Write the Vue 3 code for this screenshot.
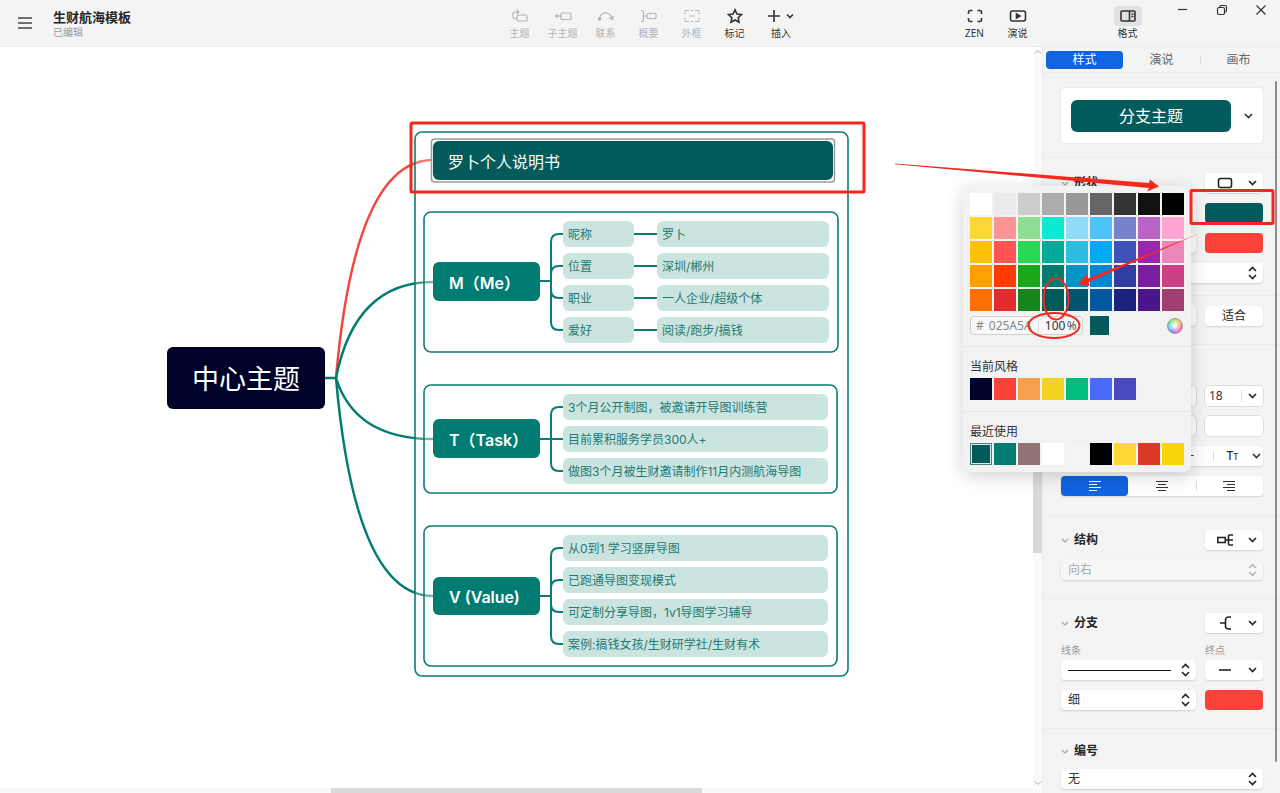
<script setup>
import { ref } from 'vue'

const editTools = [
  { id: 'topic', label: '主题', off: true },
  { id: 'sub', label: '子主题', off: true },
  { id: 'relation', label: '联系', off: true },
  { id: 'summary', label: '概要', off: true },
  { id: 'boundary', label: '外框', off: true },
  { id: 'marker', label: '标记', off: false },
  { id: 'insert', label: '插入', off: false, wide: true },
]
const tabs = ['样式', '演说', '画布']

const palette = [
  '#ffffff', '#ebebeb', '#cdcdcd', '#acacac', '#989898', '#666666', '#343434', '#111111', '#000000',
  '#fdd835', '#ff9393', '#8ede96', '#0be9d1', '#8fdcf8', '#4fc3f9', '#7683cb', '#ba64c8', '#ffa5d2',
  '#fec107', '#ff5355', '#2bd853', '#04a99c', '#2cbde0', '#03a9f7', '#3f51b5', '#9b24b0', '#ea87b9',
  '#ffa000', '#ff3a02', '#1aa81a', '#027c70', '#0294c2', '#0387d2', '#303e9f', '#7b1fa2', '#cc4088',
  '#ff7003', '#e22c30', '#15851c', '#025a5a', '#025470', '#0257a0', '#1a227e', '#4a148c', '#a04070',
]
const themeColors = ['#000229', '#fa423a', '#f6a04d', '#f3d321', '#00bd7b', '#486afe', '#4c49be']
const recentColors = ['#035a5a', '#007c70', '#927272', '#ffffff', '#f4f4f4', '#000000', '#fdd835', '#da3828', '#f8d60a']

const hex = ref('025A5A')
const opacity = ref('100')

const nodes = [
  { kind: 'root', x: 167, y: 300, w: 158, h: 62, text: '中心主题' },
  { kind: 'picked', x: 433, y: 94, w: 400, h: 39, text: '罗卜个人说明书' },
  { kind: 'main', x: 433, y: 215, w: 107, h: 39, text: 'M（Me）' },
  { kind: 'main', x: 433, y: 372, w: 107, h: 39, text: 'T（Task）' },
  { kind: 'main', x: 433, y: 530, w: 107, h: 38, text: 'V (Value)' },
]
const groups = [
  { hub: 234, top: 174, w: 71, items: ['昵称', '位置', '职业', '爱好'], extra: ['罗卜', '深圳/郴州', '一人企业/超级个体', '阅读/跑步/搞钱'] },
  { hub: 392, top: 347, w: 265, items: ['3个月公开制图，被邀请开导图训练营', '目前累积服务学员300人+', '做图3个月被生财邀请制作11月内测航海导图'] },
  { hub: 549, top: 488, w: 265, items: ['从0到1 学习竖屏导图', '已跑通导图变现模式', '可定制分享导图，1v1导图学习辅导', '案例:搞钱女孩/生财研学社/生财有术'] },
]
const leaves = []
const wires = []
for (const g of groups) {
  g.items.forEach((text, i) => {
    const y = g.top + i * 32
    const c = y + 13
    leaves.push({ x: 563, y, w: g.w, text })
    if (g.extra) {
      leaves.push({ x: 657, y, w: 172, text: g.extra[i] })
      wires.push(`M634 ${c}H657`)
    }
    const d = c < g.hub ? 8 : -8
    wires.push(Math.abs(c - g.hub) < 2 ? `M540 ${c}H563` : `M540 ${g.hub}H551V${c + d}Q551 ${c} 559 ${c}H563`)
  })
}
const box = (n) => ({ left: n.x + 'px', top: n.y + 'px', width: n.w + 'px', height: (n.h || 26) + 'px' })
</script>

<template>
  <div class="app">
    <header class="top">
      <div class="top-left">
        <button class="menu" aria-label="菜单">
          <svg width="16" height="14" viewBox="0 0 16 14" class="ln"><path d="M1 2h14M1 7h14M1 12h14" stroke-width="1.500" /></svg>
        </button>
        <div>
          <h1>生财航海模板</h1>
          <p>已编辑</p>
        </div>
      </div>

      <nav class="tools" aria-label="编辑">
        <button v-for="t in editTools" :key="t.id" class="tool" :class="{ off: t.off, wide: t.wide }">
          <span class="ico">
            <svg v-if="t.id === 'topic'" width="18" height="16" viewBox="0 0 18 16" class="ln"><rect x="6" y="7" width="10" height="6" rx="1.5" /><path d="M5.500 10.500H3.500Q2 10.500 2 9V6Q2 4 4 4H8M5.500 1.500l2.500 2.500-2.500 2" /></svg>
            <svg v-else-if="t.id === 'sub'" width="18" height="16" viewBox="0 0 18 16" class="ln"><rect x="7" y="5" width="10" height="6.500" rx="1" /><path d="M3 8h4" /><circle cx="2.500" cy="8" r="1" class="solid" /></svg>
            <svg v-else-if="t.id === 'relation'" width="18" height="16" viewBox="0 0 18 16" class="ln"><path d="M2.500 10.500C4 3 13 3 15 10.500M12 10l3.200 1.500L16.500 8" /><circle cx="2.500" cy="11" r="1.200" class="solid" /></svg>
            <svg v-else-if="t.id === 'summary'" width="18" height="16" viewBox="0 0 18 16" class="ln"><path d="M1 2.500h1.500Q3.500 2.500 3.500 4v8q0 1.500-1 1.500H1M3.500 8H7" /><rect x="7" y="5.500" width="9" height="5" rx="1" /></svg>
            <svg v-else-if="t.id === 'boundary'" width="18" height="16" viewBox="0 0 18 16" class="ln"><path d="M2 6V4q0-1.500 1.500-1.500H6M12 2.500h2.500Q16 2.500 16 4v2M16 10v2q0 1.500-1.500 1.500H12M6 13.500H3.500Q2 13.500 2 12v-2M8 2.500h2M8 13.500h2M6.500 8h5" /></svg>
            <svg v-else-if="t.id === 'marker'" width="18" height="16" viewBox="0 0 18 16" class="ln bold"><path d="M9 1.800l2 4.200 4.500.6-3.300 3.100.8 4.500L9 12l-4 2.200.8-4.500L2.500 6.600 7 6z" /></svg>
            <svg v-else width="28" height="16" viewBox="0 0 28 16" class="ln bold"><path d="M7 2v12M1 8h12M20 6.500l3 3 3-3" /></svg>
          </span>
          <span>{{ t.label }}</span>
        </button>
      </nav>

      <div class="top-right">
        <button class="tool">
          <span class="ico"><svg width="16" height="14" viewBox="0 0 16 14" class="ln bold"><path d="M1.500 5V3q0-1.500 1.500-1.500h2.500M10.500 1.500H13q1.500 0 1.500 1.500v2M14.500 9v2q0 1.500-1.500 1.500h-2.500M5.500 12.500H3q-1.500 0-1.500-1.500V9" /></svg></span>
          <span>ZEN</span>
        </button>
        <button class="tool">
          <span class="ico"><svg width="18" height="14" viewBox="0 0 18 14" class="ln bold"><rect x="1.500" y="2" width="15" height="10" rx="2" /><path d="M7.500 5v4l3.500-2z" class="solid" /></svg></span>
          <span>演说</span>
        </button>
        <button class="tool format">
          <span class="ico"><svg width="16" height="14" viewBox="0 0 16 14" class="ln bold"><rect x="1" y="2" width="14" height="10" rx="1" /><path d="M9.500 2v10M11.500 5h2M11.500 7.500h2" /></svg></span>
          <span>格式</span>
        </button>
        <div class="win">
          <button aria-label="最小化"><svg width="12" height="12" viewBox="0 0 12 12" class="ln"><path d="M1 5.500h9" /></svg></button>
          <button aria-label="还原"><svg width="12" height="12" viewBox="0 0 12 12" class="ln"><rect x="1.500" y="3.500" width="7" height="7" rx="1.500" /><path d="M4 3V2.500Q4 1.500 5.500 1.500H9Q10.500 1.500 10.500 3v3.500Q10.500 8 9 8" /></svg></button>
          <button aria-label="关闭"><svg width="12" height="12" viewBox="0 0 12 12" class="ln"><path d="M1.500 1.500l9 9M10.500 1.500l-9 9" /></svg></button>
        </div>
      </div>
    </header>

    <div class="work">
      <main class="board">
        <div class="canvas">
          <svg class="sheet" aria-hidden="true">
            <g fill="none" stroke="#007c70" stroke-width="2.500">
              <path d="M336 331Q355 113 433 113" stroke="#f5463e" />
              <path d="M325 331H336Q355 235 433 235M336 331Q355 392 433 392M336 331Q355 549 433 549" />
            </g>
            <g class="frame">
              <rect x="415" y="85" width="433" height="544" rx="7" />
              <rect x="424" y="165" width="414" height="140" rx="7" />
              <rect x="424" y="338" width="413" height="108" rx="7" />
              <rect x="424" y="479" width="413" height="140" rx="7" />
            </g>
            <path v-for="(d, i) in wires" :key="i" :d="d" fill="none" stroke="#0b7c72" stroke-width="2" />
            <rect x="431.500" y="92" width="403" height="43" rx="3" fill="#fff" stroke="#9a9a9a" stroke-width="1.500" />
          </svg>
          <div v-for="n in nodes" :key="n.text" class="node" :class="n.kind" :style="box(n)">{{ n.text }}</div>
          <div v-for="n in leaves" :key="n.text" class="node leaf" :style="box(n)">{{ n.text }}</div>
          <svg class="sheet" aria-hidden="true">
            <rect x="411" y="76" width="453" height="69" rx="1" fill="none" stroke="#f5281e" stroke-width="3" />
          </svg>
        </div>
        <div class="bar-h"><span class="thumb-h"></span></div>
        <div class="bar-v">
          <svg width="8" height="6" viewBox="0 0 8 6"><path d="M1 4.500l3-3 3 3" /></svg>
          <span class="thumb-v"></span>
          <svg width="8" height="6" viewBox="0 0 8 6"><path d="M1 1.500l3 3 3-3" /></svg>
        </div>
      </main>

      <aside class="panel">
        <div class="tabs" role="tablist">
          <button v-for="(t, i) in tabs" :key="t" role="tab" :aria-selected="i === 0" :class="{ on: i === 0 }">{{ t }}</button>
        </div>

        <section class="s-preview">
          <button class="preview">
            <span>分支主题</span>
            <svg width="9" height="6" viewBox="0 0 9 6" class="ln bold"><path d="M1 1l3.500 3.500L8 1" /></svg>
          </button>
        </section>

        <section class="s-shape">
          <div class="head">
            <h2><svg width="8" height="5" viewBox="0 0 8 5"><path d="M1 1l3 3 3-3" /></svg>形状</h2>
            <button class="pick" aria-label="形状">
              <svg width="16" height="14" viewBox="0 0 16 14" class="ln bold"><rect x="1.500" y="2.500" width="13" height="9" rx="2" /></svg>
              <svg width="9" height="6" viewBox="0 0 9 6" class="ln bold"><path d="M1 1l3.500 3.500L8 1" /></svg>
            </button>
          </div>
          <div class="pair"><select class="field" aria-label="填充方式"><option>填充</option></select><button class="chip teal" aria-label="填充颜色"></button></div>
          <div class="pair"><select class="field" aria-label="边框样式"><option>边框</option></select><button class="chip red" aria-label="边框颜色"></button></div>
          <div class="sel">
            <select class="field" aria-label="边框粗细"><option>无</option></select>
            <svg width="9" height="14" viewBox="0 0 9 14" class="ln bold"><path d="M1 5l3.500-3.500L8 5M1 9l3.500 3.500L8 9" /></svg>
          </div>
        </section>

        <section class="s-size">
          <div class="pair"><input class="field" aria-label="宽度" value="343"><button class="pick mid">适合</button></div>
        </section>

        <section class="s-text">
          <div class="head"><h2><svg width="8" height="5" viewBox="0 0 8 5"><path d="M1 1l3 3 3-3" /></svg>文本</h2></div>
          <div class="pair">
            <select class="field edge" aria-label="字体"><option>NeverMind</option></select>
            <div class="sel size">
              <select class="field edge" aria-label="字号"><option>18</option></select>
              <svg width="9" height="6" viewBox="0 0 9 6" class="ln bold"><path d="M1 1l3.500 3.500L8 1" /></svg>
            </div>
          </div>
          <div class="pair"><select class="field edge" aria-label="字重"><option>Regular</option></select><button class="chip blank" aria-label="文字颜色"></button></div>
          <div class="seg four">
            <button><b>B</b></button><button><i>I</i></button><button><s>&nbsp;S&nbsp;</s></button>
            <button class="case" aria-label="大小写">
              <span>T<small>T</small></span>
              <svg width="9" height="6" viewBox="0 0 9 6" class="ln bold"><path d="M1 1l3.500 3.500L8 1" /></svg>
            </button>
          </div>
          <div class="seg three">
            <button class="on" aria-label="左对齐"><svg width="14" height="12" viewBox="0 0 14 12"><path d="M1 1.500h12M1 4.500h8M1 7.500h12M1 10.500h8" /></svg></button>
            <button aria-label="居中"><svg width="14" height="12" viewBox="0 0 14 12"><path d="M1 1.500h12M3 4.500h8M1 7.500h12M3 10.500h8" /></svg></button>
            <button aria-label="右对齐"><svg width="14" height="12" viewBox="0 0 14 12"><path d="M1 1.500h12M5 4.500h8M1 7.500h12M5 10.500h8" /></svg></button>
          </div>
        </section>

        <section class="s-struct">
          <div class="head">
            <h2><svg width="8" height="5" viewBox="0 0 8 5"><path d="M1 1l3 3 3-3" /></svg>结构</h2>
            <button class="pick" aria-label="结构">
              <svg width="16" height="14" viewBox="0 0 16 14" class="ln bold"><rect x="0.800" y="4.500" width="7.500" height="5" /><path d="M8.300 7H16M16 2H12.500Q11.500 2 11.500 3v8q0 1 1 1H16" /></svg>
              <svg width="9" height="6" viewBox="0 0 9 6" class="ln bold"><path d="M1 1l3.500 3.500L8 1" /></svg>
            </button>
          </div>
          <div class="sel">
            <select class="field dim" aria-label="方向" disabled><option>向右</option></select>
            <svg width="9" height="14" viewBox="0 0 9 14" class="ln gray"><path d="M1 5l3.500-3.500L8 5M1 9l3.500 3.500L8 9" /></svg>
          </div>
        </section>

        <section class="s-branch">
          <div class="head">
            <h2><svg width="8" height="5" viewBox="0 0 8 5"><path d="M1 1l3 3 3-3" /></svg>分支</h2>
            <button class="pick" aria-label="分支">
              <svg width="16" height="14" viewBox="0 0 16 14" class="ln bold"><path d="M3 7h5.500M14 1h-2Q8.500 1 8.500 4v6q0 3 3.500 3h2" /></svg>
              <svg width="9" height="6" viewBox="0 0 9 6" class="ln bold"><path d="M1 1l3.500 3.500L8 1" /></svg>
            </button>
          </div>
          <div class="pair caps"><label for="line-style">线条</label><label for="line-end">终点</label></div>
          <div class="pair">
            <button id="line-style" class="pick line" aria-haspopup="listbox">
              <span class="rule"></span>
              <svg width="9" height="14" viewBox="0 0 9 14" class="ln bold"><path d="M1 5l3.500-3.500L8 5M1 9l3.500 3.500L8 9" /></svg>
            </button>
            <button id="line-end" class="pick" aria-haspopup="listbox">
              <svg width="16" height="14" viewBox="0 0 16 14" class="ln bold"><path d="M2 7h12" /></svg>
              <svg width="9" height="6" viewBox="0 0 9 6" class="ln bold"><path d="M1 1l3.500 3.500L8 1" /></svg>
            </button>
          </div>
          <div class="pair">
            <div class="sel">
              <select class="field" aria-label="线条粗细"><option>细</option></select>
              <svg width="9" height="14" viewBox="0 0 9 14" class="ln bold"><path d="M1 5l3.500-3.500L8 5M1 9l3.500 3.500L8 9" /></svg>
            </div>
            <button class="chip red" aria-label="线条颜色"></button>
          </div>
        </section>

        <section class="s-num">
          <div class="head"><h2><svg width="8" height="5" viewBox="0 0 8 5"><path d="M1 1l3 3 3-3" /></svg>编号</h2></div>
          <div class="sel">
            <select class="field" aria-label="编号"><option>无</option></select>
            <svg width="9" height="14" viewBox="0 0 9 14" class="ln bold"><path d="M1 5l3.500-3.500L8 5M1 9l3.500 3.500L8 9" /></svg>
          </div>
        </section>
        <span class="thumb-p"></span>
      </aside>
    </div>

    <div class="picker" role="dialog" aria-label="颜色">
      <div class="swatches">
        <button v-for="c in palette" :key="c" :aria-label="c" :style="{ background: c }"></button>
      </div>
      <div class="code">
        <div class="code-box">
          <label for="hex">#</label>
          <input id="hex" v-model="hex">
          <input id="alpha" v-model="opacity" aria-label="不透明度">
          <label for="alpha">%</label>
        </div>
        <span class="now"></span>
        <button class="wheel" aria-label="更多颜色"></button>
      </div>
      <h3>当前风格</h3>
      <div class="swatches">
        <button v-for="c in themeColors" :key="c" :aria-label="c" :style="{ background: c }"></button>
      </div>
      <h3>最近使用</h3>
      <div class="swatches">
        <button v-for="(c, i) in recentColors" :key="c" :aria-label="c" :class="{ chosen: i === 0 }" :style="{ background: c }"></button>
      </div>
    </div>

    <svg class="marks" width="400" height="400" viewBox="880 0 400 400" aria-hidden="true">
      <g fill="#f5281e">
        <path d="M895 163.500L1149 183 1150 179.500 1159 186.500 1147 191.500 1149 188 895 164.300z" />
        <path d="M1200 233L1088 278.500 1086.500 274.500 1078 284.300 1089.500 286 1088.800 282z" />
      </g>
      <g fill="none" stroke="#f5281e" stroke-width="2">
        <ellipse cx="1056" cy="299" rx="12.500" ry="20.500" />
        <ellipse cx="1054" cy="325.500" rx="25.500" ry="12.500" />
        <rect x="1191" y="190.500" width="82" height="33" rx="1" stroke-width="3" />
      </g>
    </svg>
  </div>
</template>

<style>
html, body { margin: 0; background: #f4f4f4; }
</style>

<style scoped>
.app {
  position: relative;
  display: flex;
  flex-direction: column;
  height: 100vh;
  overflow: hidden;
  background: #f4f4f4;
  color: #333;
  font: 12px/16px "Noto Sans", "Noto Sans CJK SC", sans-serif;
}
.app *, .app *::before { box-sizing: border-box; }
button, input, select {
  margin: 0;
  padding: 0;
  border: 0;
  background: none;
  color: inherit;
  font: inherit;
  appearance: none;
  outline: none;
}
h1, h2, h3, p { margin: 0; }
svg { display: block; flex: none; }
.ln { fill: none; stroke: currentColor; stroke-width: 1.2; }
.ln.bold { stroke-width: 1.6; }
.ln .solid { fill: currentColor; }

/* top bar */
.top { display: flex; flex: none; height: 47px; border-bottom: 1px solid #ededed; }
.top-left { flex: 68 1 0; display: flex; gap: 20px; padding: 9px 0 0 17px; }
.menu { height: 28px; color: #444; }
h1 { font-size: 13px; line-height: 17px; font-weight: 700; color: #262626; }
p { font-size: 10px; line-height: 13px; color: #999; }
.tools { display: flex; flex: none; }
.tool {
  display: flex;
  flex-direction: column;
  align-items: center;
  width: 43px;
  padding-top: 6px;
  font-size: 10px;
  line-height: 15px;
  white-space: nowrap;
}
.tool.wide { width: 50px; }
.tool.off { color: #b4b4b4; }
.ico { display: grid; place-items: center; width: 28px; height: 20px; border-radius: 4px; }
.top-right { flex: 67 1 0; display: flex; justify-content: flex-end; }
.format { margin: 0 14px 0 67px; }
.format .ico { background: #e1e1e1; }
.win { display: flex; }
.win button { display: grid; place-items: center; width: 39px; height: 20px; }

/* canvas */
.work { display: flex; flex: 1; min-height: 0; }
.board {
  display: grid;
  grid-template: minmax(0, 1fr) 5px / minmax(0, 1fr) 9px;
  flex: 1;
  min-width: 0;
}
.canvas { position: relative; overflow: hidden; background: #fff; }
.sheet { position: absolute; inset: 0; width: 100%; height: 100%; }
.frame rect { fill: rgba(255, 255, 255, .25); stroke: #0b7c72; stroke-width: 1.6; }
.node {
  position: absolute;
  display: flex;
  align-items: center;
  padding-top: 2px;
  border-radius: 6px;
  white-space: nowrap;
  font-family: Inter, "Noto Sans CJK SC", sans-serif;
}
.root { justify-content: center; padding-top: 4px; background: #000229; color: #fff; font-size: 27px; }
.picked { padding-left: 15px; background: #035b5b; color: #fff; font-size: 16px; }
.main { padding-left: 16px; background: #007c72; color: #fff; font-size: 16px; font-weight: 600; }
.leaf { padding-left: 5px; background: #cce4e0; color: #217a72; font-size: 12px; }
.bar-h { grid-area: 2 / 1; background: #f9f9f9; }
.thumb-h { display: block; width: 36%; height: 5px; margin-left: 32%; background: #d9d9d9; }
.bar-v {
  grid-area: 1 / 2 / 3 / 3;
  display: flex;
  flex-direction: column;
  align-items: center;
  padding: 2px 0 7px;
  background: #fafafa;
}
.bar-v svg { fill: none; stroke: #aaa; }
.thumb-v { width: 9px; flex: 0 0 42%; margin: 188px 0 auto; background: #d9d9d9; }

/* format panel */
.panel {
  position: relative;
  flex: 0 0 238px;
  border-left: 1px solid #ebebeb;
  overflow: hidden;
}
.tabs { display: flex; padding: 4px 3px 3px; border-bottom: 1px solid #ececec; }
.tabs button { flex: 1; height: 18px; border-radius: 4px; line-height: 18px; color: #666; }
.tabs .on { background: #1064e0; color: #fff; }
.tabs button:last-child { background: linear-gradient(#ddd, #ddd) 0 50% / 1px 10px no-repeat; }
section { display: flex; flex-direction: column; gap: 10px; padding: 0 17px 0 18px; }
section + section { border-top: 1px solid #ececec; }
.s-preview { padding-top: 15px; padding-bottom: 14px; }
.s-shape { padding-top: 15px; padding-bottom: 12px; }
.s-size { padding-top: 10px; padding-bottom: 18px; }
.s-text { padding-top: 11px; padding-bottom: 19px; }
.s-struct { padding-top: 14px; padding-bottom: 18px; }
.s-branch { padding-top: 14px; padding-bottom: 18px; }
.s-num { padding-top: 12px; gap: 8px; }
.preview {
  display: flex;
  align-items: center;
  justify-content: space-between;
  height: 55px;
  padding: 0 10px;
  border-radius: 4px;
  background: #fff;
  box-shadow: 0 0 2px rgba(0, 0, 0, .16);
}
.preview span {
  width: 160px;
  border-radius: 6px;
  background: #035b5b;
  color: #fff;
  font-size: 16px;
  line-height: 32px;
}
.head { display: flex; align-items: center; justify-content: space-between; height: 20px; }
h2 { display: flex; align-items: center; gap: 5px; font-size: 12px; line-height: 20px; font-weight: 700; color: #262626; }
h2 svg { fill: none; stroke: #aaa; stroke-width: 1.4; }
.pair { display: grid; grid-template-columns: minmax(0, 1fr) 58px; gap: 9px; }
.caps { height: 17px; margin-bottom: -10px; font-size: 10px; line-height: 14px; color: #999; }
.field {
  width: 100%;
  height: 20px;
  padding: 0 7px;
  border-radius: 4px;
  background: #fff;
  box-shadow: 0 1px 2px rgba(0, 0, 0, .16);
  line-height: 20px;
}
.edge { box-shadow: 0 0 0 1px #dcdcdc; }
.dim { background: #f7f7f7; color: #aaa; opacity: 1; }
.sel { display: grid; align-items: center; }
.sel > * { grid-area: 1 / 1; }
.sel svg { justify-self: end; margin-right: 6px; color: #222; pointer-events: none; }
.sel .gray { color: #aaa; }
.size .field { padding: 0 4px; background: linear-gradient(#ddd, #ddd) 36px 50% / 1px 12px no-repeat #fff; }
.pick {
  display: flex;
  align-items: center;
  justify-content: space-between;
  width: 58px;
  height: 20px;
  padding: 0 6px 0 12px;
  border-radius: 4px;
  background: #fff;
  box-shadow: 0 1px 2px rgba(0, 0, 0, .14);
  color: #222;
}
.pick.mid { justify-content: center; padding: 0; }
.pick.line { width: auto; gap: 10px; padding: 0 6px 0 7px; }
.rule { flex: 1; height: 1px; background: #111; }
.chip { height: 20px; border-radius: 4px; }
.teal { background: #035b5b; }
.red { background: #fa423a; }
.blank { background: #fff; box-shadow: 0 0 0 1px #dfdfdf; }
.seg { display: grid; height: 20px; border-radius: 4px; background: #fff; box-shadow: 0 1px 2px rgba(0, 0, 0, .14); }
.four { grid-template-columns: repeat(4, 1fr); }
.three { grid-template-columns: repeat(3, 1fr); }
.seg button { display: grid; place-items: center; border-radius: 4px; }
.seg button:last-child { background: linear-gradient(#ddd, #ddd) 0 50% / 1px 10px no-repeat; }
.seg .on { background: #1064e0; color: #fff; }
.seg svg { fill: none; stroke: currentColor; }
.seg .case { display: flex; align-items: center; justify-content: space-between; padding: 0 2px 0 14px; }
.case span { font-weight: 500; }
.case small { font-size: 9px; }
.thumb-p { position: absolute; top: 34px; bottom: 31px; right: 3px; width: 2px; border-radius: 1px; background: #8c8c8c; }

/* colour popover */
.picker {
  position: absolute;
  top: 186px;
  right: 89px;
  padding: 7px;
  border-radius: 7px;
  background: #f2f2f2;
  box-shadow: 0 4px 18px rgba(0, 0, 0, .18);
}
.swatches { display: grid; grid-template-columns: repeat(9, 22px); gap: 2px; }
.swatches button { height: 22px; }
.swatches .chosen { border: 1px solid #4d7d7d; box-shadow: inset 0 0 0 1px #dfe8e8; }
.code { display: flex; align-items: center; padding: 5px 0 11px; }
.code-box {
  display: flex;
  align-items: center;
  width: 113px;
  height: 19px;
  padding: 0 4px 0 5px;
  border: 1px solid #d0d0d0;
  border-radius: 4px;
  background: #f8f8f8;
  color: #888;
}
#hex { flex: none; width: 49px; margin-left: 5px; }
#alpha { flex: none; width: 29px; padding-left: 6px; border-left: 1px solid #ddd; color: #333; line-height: 12px; }
#alpha + label { color: #555; }
.now { width: 19px; height: 19px; margin-left: 7px; background: #035a5a; }
.wheel {
  width: 16px;
  height: 16px;
  margin: 0 1px 0 auto;
  border: 1px solid #999;
  border-radius: 50%;
  background:
    radial-gradient(circle, #fff 5%, rgba(255, 255, 255, 0) 75%),
    conic-gradient(#b4e04c, #ffa45c, #ff5a6e, #f05ae0, #7a6cff, #4cc8ff, #4ce08c, #b4e04c);
}
h3 { margin: 0 -7px; padding: 12px 7px 4px; border-top: 1px solid #e6e6e6; font-size: 12px; line-height: 15px; font-weight: 400; }
.swatches + h3 { margin-top: 11px; }
.marks { position: absolute; top: 0; right: 0; pointer-events: none; }
</style>
